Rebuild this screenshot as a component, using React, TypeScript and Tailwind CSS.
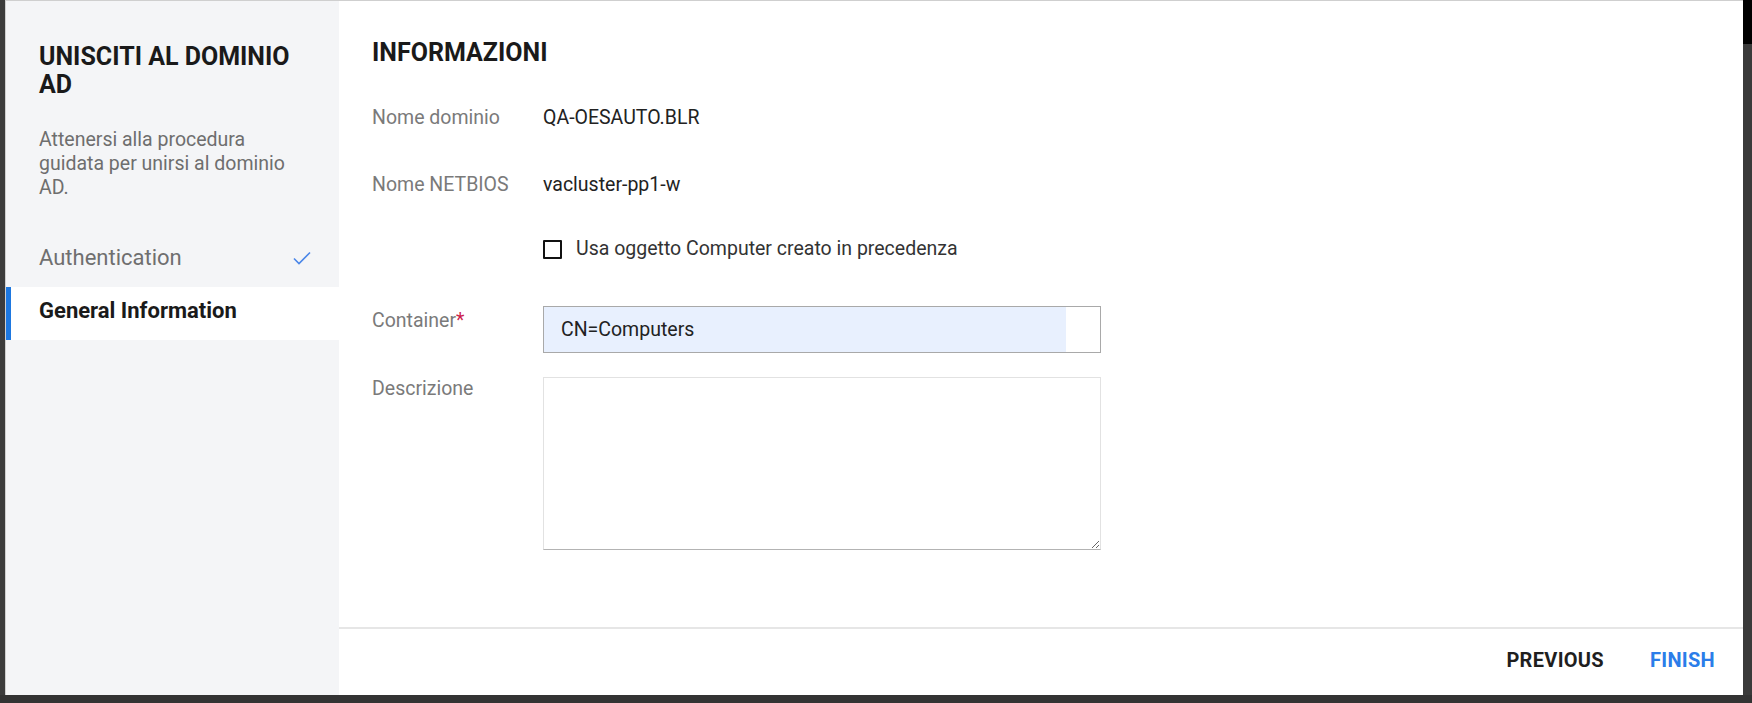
import React from "react";

export default function App() {
  return (
    <div className="w-[1752px] h-[703px] flex flex-col bg-[#3a3a3a] font-['Roboto',sans-serif] overflow-hidden">
      <div className="flex h-[695px]">
        <div className="w-[5px] bg-[#3c3c3c]" />
        <div className="w-[1738px] flex border-t border-l border-[#cfcfcf] bg-white">
          {/* Sidebar */}
          <div className="w-[333px] flex flex-col bg-[#f4f5f7]">
            <div className="pt-[42px] pl-[33px] pr-[44px]">
              <h1 className="text-[25px] font-bold leading-[28px] text-[#1a1a1a]">
                UNISCITI AL DOMINIO AD
              </h1>
              <p className="mt-[29px] text-[19.5px] leading-[24px] text-[#6e6e6e]">
                Attenersi alla procedura guidata per unirsi al dominio AD.
              </p>
            </div>
            <div className="mt-[34px] flex flex-col">
              <div className="h-[53px] flex items-start justify-between pt-[10px] pl-[33px] pr-[28px]">
                <span className="text-[22px] leading-[28px] text-[#6f6f6f]">Authentication</span>
                <span className="h-[28px] flex items-center">
                  <svg width="18" height="14" viewBox="0 0 18 14" fill="none">
                    <polyline points="1,7.5 6,12.5 17,1.5" stroke="#4a86e8" strokeWidth="1.6" fill="none" />
                  </svg>
                </span>
              </div>
              <div className="relative h-[53px] flex items-start pt-[10px] pl-[33px] bg-white">
                <div className="absolute left-0 top-0 bottom-0 w-[5px] bg-[#1e78e0]" />
                <span className="text-[22px] font-bold leading-[28px] text-[#1a1a1a]">General Information</span>
              </div>
            </div>
          </div>

          {/* Main */}
          <div className="w-[1404px] flex flex-col">
            <div className="flex-1 pt-[38px] pl-[33px]">
              <h2 className="text-[25px] font-bold leading-[28px] text-[#1a1a1a]">INFORMAZIONI</h2>

              <div className="mt-[39px] flex text-[19.5px] leading-[24px]">
                <span className="w-[171px] text-[#7a7a7a]">Nome dominio</span>
                <span className="text-[#222222]">QA-OESAUTO.BLR</span>
              </div>

              <div className="mt-[43px] flex text-[19.5px] leading-[24px]">
                <span className="w-[171px] text-[#7a7a7a]">Nome NETBIOS</span>
                <span className="text-[#222222]">vacluster-pp1-w</span>
              </div>

              <div className="mt-[40px] flex items-center h-[24px] ml-[171px]">
                <span className="w-[19px] h-[19px] border-2 border-[#111111] rounded-[1px] bg-white" />
                <span className="ml-[14px] text-[19.5px] leading-[24px] text-[#333333]">
                  Usa oggetto Computer creato in precedenza
                </span>
              </div>

              <div className="mt-[45px] flex items-start text-[19.5px] leading-[24px]">
                <span className="w-[171px] pt-[3px] text-[#7a7a7a]">
                  Container<span className="text-[#cc1f4d]">*</span>
                </span>
                <div className="w-[558px] h-[47px] flex border border-[#a9a9a9]">
                  <div className="flex-1 flex items-center bg-[#e8f0fe] pl-[17px] text-[#222222]">
                    CN=Computers
                  </div>
                  <div className="w-[34px] bg-white" />
                </div>
              </div>

              <div className="mt-[24px] flex items-start text-[19.5px] leading-[24px]">
                <span className="w-[171px] text-[#7a7a7a]">Descrizione</span>
                <textarea
                  className="w-[558px] h-[173px] border border-[#e2e2e2] border-b-[#b3b3b3] bg-white outline-none"
                  readOnly
                />
              </div>
            </div>

            <div className="h-[68px] border-t-2 border-[#e6e6e6] flex items-center justify-end gap-[46px] pr-[28px] pb-[4px]">
              <span className="text-[20px] font-bold tracking-[0.3px] text-[#1f1f1f]">PREVIOUS</span>
              <span className="text-[20px] font-bold tracking-[0.3px] text-[#2b7de9]">FINISH</span>
            </div>
          </div>
        </div>
        <div className="w-[9px] flex flex-col">
          <div className="h-[44px] bg-black" />
          <div className="flex-1 bg-[#3a3a3a]" />
        </div>
      </div>
      <div className="h-[8px] bg-[#333333]" />
    </div>
  );
}
